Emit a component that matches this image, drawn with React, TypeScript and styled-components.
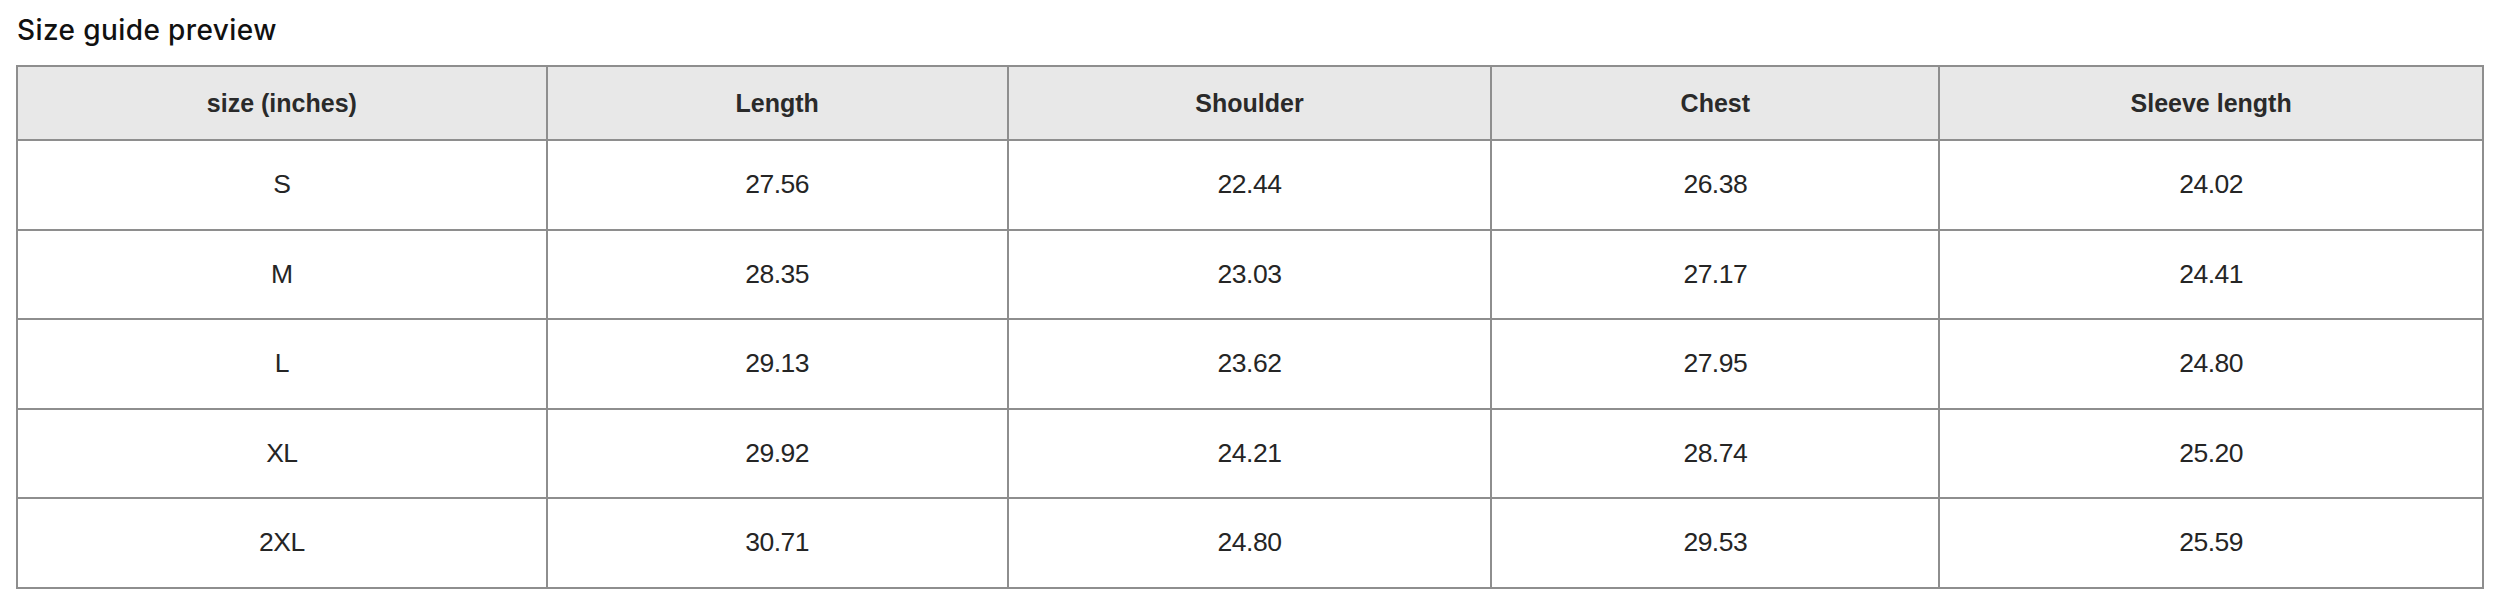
import React from "react";
import styled, { createGlobalStyle } from "styled-components";

const GlobalStyle = createGlobalStyle`
  html, body {
    margin: 0;
    padding: 0;
    background: #ffffff;
  }
  body {
    font-family: "Liberation Sans", Arial, sans-serif;
    color: #222222;
  }
`;

const Page = styled.div`
  padding: 12px 16px 0 16px;
`;

const Title = styled.h2`
  margin: 0 0 17px 1px;
  font-family: Inter, "Liberation Sans", Arial, sans-serif;
  font-weight: 500;
  font-size: 28px;
  line-height: 36px;
  letter-spacing: 0.4px;
  color: #111111;
`;

const Table = styled.table`
  width: 100%;
  border-collapse: collapse;
  table-layout: fixed;
  border: 2px solid #8e8e8e;
`;

const HeadCell = styled.th`
  height: 72px;
  padding: 0 8px;
  background: #e8e8e8;
  border: 2px solid #8e8e8e;
  font-family: "Liberation Sans", Arial, sans-serif;
  font-weight: 700;
  font-size: 25px;
  color: #2a2a2a;
  text-align: center;
  vertical-align: middle;
`;

const Cell = styled.td`
  height: 87.5px;
  padding: 0 8px;
  border: 2px solid #8e8e8e;
  font-family: "Liberation Sans", Arial, sans-serif;
  font-weight: 400;
  font-size: 26.5px;
  letter-spacing: -0.5px;
  color: #252525;
  text-align: center;
  vertical-align: middle;
`;

const columns = [
  { label: "size (inches)", width: 21.48 },
  { label: "Length", width: 18.69 },
  { label: "Shoulder", width: 19.62 },
  { label: "Chest", width: 18.16 },
  { label: "Sleeve length", width: 22.05 },
];

const rows = [
  ["S", "27.56", "22.44", "26.38", "24.02"],
  ["M", "28.35", "23.03", "27.17", "24.41"],
  ["L", "29.13", "23.62", "27.95", "24.80"],
  ["XL", "29.92", "24.21", "28.74", "25.20"],
  ["2XL", "30.71", "24.80", "29.53", "25.59"],
];

export default function App() {
  return (
    <>
      <GlobalStyle />
      <Page>
        <Title>Size guide preview</Title>
        <Table>
          <colgroup>
            {columns.map((c) => (
              <col key={c.label} style={{ width: `${c.width}%` }} />
            ))}
          </colgroup>
          <thead>
            <tr>
              {columns.map((c) => (
                <HeadCell key={c.label}>{c.label}</HeadCell>
              ))}
            </tr>
          </thead>
          <tbody>
            {rows.map((r) => (
              <tr key={r[0]}>
                {r.map((v, i) => (
                  <Cell key={i}>{v}</Cell>
                ))}
              </tr>
            ))}
          </tbody>
        </Table>
      </Page>
    </>
  );
}
